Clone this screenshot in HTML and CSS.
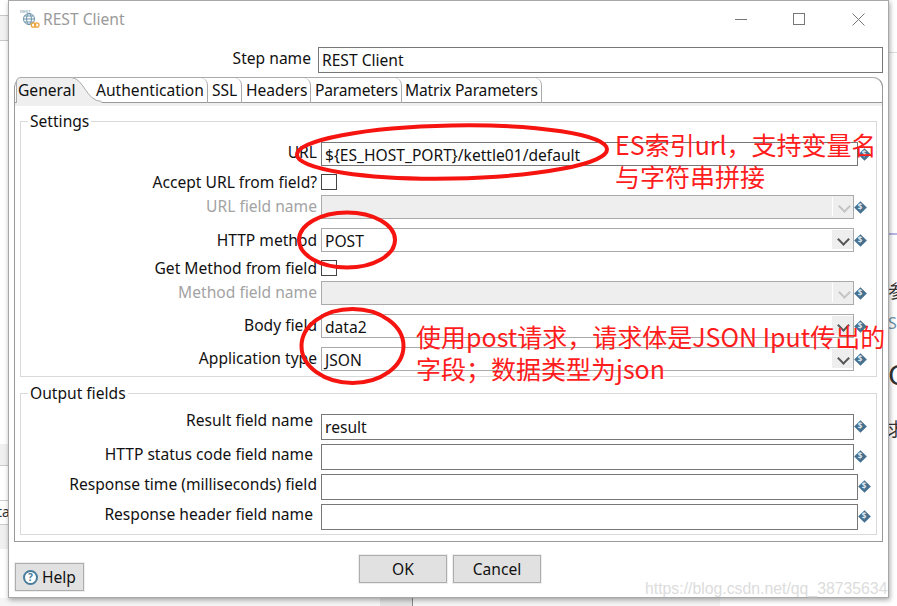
FILE: index.html
```html
<!DOCTYPE html>
<html lang="en">
<head>
<meta charset="utf-8">
<title>REST Client</title>
<link rel="stylesheet" href="styles.css">
</head>
<body>
<div class="desktop">
  <div class="bg bg-left-top"></div>
  <div class="bg bg-left-mid"></div>
  <div class="bg bg-left-cell"><span>ta</span></div>
  <div class="bg bg-left-low"></div>
  <div class="bg bg-bottom"></div>
  <div class="bg bg-bottom-bars"></div>
  <div class="bg bg-right-line"></div>
  <div class="bg bg-right-dots"></div>
  <span class="bg bg-char bg-can">参</span>
  <span class="bg bg-char bg-s">S</span>
  <span class="bg bg-char bg-c">C</span>
  <span class="bg bg-char bg-qiu">求</span>

  <main class="window">
    <header class="titlebar">
      <svg class="app-icon" width="20" height="20" viewBox="0 0 20 20" aria-hidden="true">
        <text x="0" y="4" class="app-icon-text">REST</text>
        <circle cx="9" cy="10" r="5.5" fill="none" stroke="#6d93a8" stroke-width="1"/>
        <ellipse cx="9" cy="10" rx="2.4" ry="5.5" fill="none" stroke="#6d93a8" stroke-width="1"/>
        <path d="M3.5 10H14.500M4.500 7H13.500M4.500 13H13.500" stroke="#6d93a8" stroke-width="1"/>
        <circle cx="13.500" cy="16" r="2.200" fill="none" stroke="#eda53d" stroke-width="1.300"/>
        <circle cx="16.800" cy="16" r="2.200" fill="none" stroke="#eda53d" stroke-width="1.300"/>
      </svg>
      <span class="title">REST Client</span>
      <div class="controls">
        <span class="ctl ctl-min"></span>
        <span class="ctl ctl-max"></span>
        <svg class="ctl-close" width="13" height="13" viewBox="0 0 13 13" aria-hidden="true"><path d="M.5.5l12 12M12.500.5l-12 12" stroke="#777" fill="none"/></svg>
      </div>
    </header>

    <div class="step-row">
      <label class="step-label">Step name</label>
      <div class="field step-field">REST Client</div>
    </div>

    <section class="folder">
      <nav class="tabs">
        <div class="tab tab-active">
          <svg class="tab-shape" width="86" height="26" viewBox="0 0 86 26" aria-hidden="true">
            <path d="M.5 26V5Q.5 .5 5 .5H55C68 1 70 24 85.500 24.500V26Z" fill="#efefef"/>
            <path d="M.5 26V5Q.5 .5 5 .5H55C68 1 70 24 85.500 24.500" fill="none" stroke="#aaa"/>
          </svg>
          <span class="tab-text">General</span>
        </div>
        <div class="tab tab-auth">Authentication</div>
        <div class="tab tab-ssl">SSL</div>
        <div class="tab tab-head">Headers</div>
        <div class="tab tab-para">Parameters</div>
        <div class="tab tab-matrix">Matrix Parameters</div>
      </nav>
      <div class="folder-body">
        <fieldset class="group group-settings">
          <legend>Settings</legend>
          <div class="row">
            <label class="lbl lbl-high">URL</label>
            <div class="field wide">${ES_HOST_PORT}/kettle01/default</div>
            <span class="var"><b>$</b></span>
          </div>
          <div class="row row-check gap-8">
            <label class="lbl lbl-down">Accept URL from field?</label>
            <span class="check"></span>
          </div>
          <div class="row gap-6">
            <label class="lbl lbl-off">URL field name</label>
            <div class="combo off"><span class="combo-text"></span><span class="arrow"></span></div>
            <span class="var"><b>$</b></span>
          </div>
          <div class="row gap-9">
            <label class="lbl lbl-down">HTTP method</label>
            <div class="combo"><span class="combo-text">POST</span><span class="arrow"></span></div>
            <span class="var"><b>$</b></span>
          </div>
          <div class="row row-check gap-8">
            <label class="lbl lbl-down">Get Method from field</label>
            <span class="check"></span>
          </div>
          <div class="row gap-6">
            <label class="lbl lbl-off">Method field name</label>
            <div class="combo off"><span class="combo-text"></span><span class="arrow"></span></div>
            <span class="var"><b>$</b></span>
          </div>
          <div class="row gap-9">
            <label class="lbl">Body field</label>
            <div class="combo"><span class="combo-text">data2</span><span class="arrow"></span></div>
            <span class="var"><b>$</b></span>
          </div>
          <div class="row gap-9">
            <label class="lbl">Application type</label>
            <div class="combo"><span class="combo-text">JSON</span><span class="arrow"></span></div>
            <span class="var"><b>$</b></span>
          </div>
        </fieldset>
        <fieldset class="group group-output">
          <legend>Output fields</legend>
          <div class="row row-out">
            <label class="lbl lbl-in lbl-result">Result field name</label>
            <div class="field narrow">result</div>
            <span class="var var-up"><b>$</b></span>
          </div>
          <div class="row row-out gap-4">
            <label class="lbl lbl-in">HTTP status code field name</label>
            <div class="field narrow"></div>
            <span class="var var-up"><b>$</b></span>
          </div>
          <div class="row row-out gap-4">
            <label class="lbl lbl-time">Response time (milliseconds) field</label>
            <div class="field wide"></div>
            <span class="var var-up"><b>$</b></span>
          </div>
          <div class="row row-out gap-4">
            <label class="lbl lbl-in">Response header field name</label>
            <div class="field wide"></div>
            <span class="var var-up"><b>$</b></span>
          </div>
        </fieldset>
      </div>
    </section>

    <footer class="footer">
      <button class="btn btn-help" type="button"><span class="help-icon">?</span>Help</button>
      <button class="btn btn-ok" type="button">OK</button>
      <button class="btn btn-cancel" type="button">Cancel</button>
    </footer>
  </main>

  <svg class="marks" width="897" height="606" viewBox="0 0 897 606" aria-hidden="true">
    <ellipse cx="452" cy="152" rx="155" ry="26.500" transform="rotate(-1 452 152)"/>
    <ellipse cx="347" cy="240" rx="48" ry="27.500"/>
    <ellipse cx="352.500" cy="346" rx="51" ry="37"/>
  </svg>
  <p class="note note-url">ES索引url，支持变量名<br>与字符串拼接</p>
  <p class="note note-body">使用post请求，请求体是JSON Iput传出的<br>字段；数据类型为json</p>
  <span class="watermark">https://blog.csdn.net/qq_38735634</span>
</div>
</body>
</html>
```
FILE: styles.css
```css
* { box-sizing: border-box; }
html, body { margin: 0; padding: 0; background: #fff; }
body { font-family: "Noto Sans", "Noto Sans CJK SC", sans-serif; font-size: 15.6px; color: #111; }

.desktop { position: relative; width: 897px; height: 606px; overflow: hidden; background: #fff; }

.bg { position: absolute; }
.bg-left-top { left: 0; top: 15px; width: 9px; height: 26px; background: #f1f1f1; border-top: 1px solid #c8c8c8; border-bottom: 1px solid #c8c8c8; }
.bg-left-mid { left: 0; top: 444px; width: 9px; height: 22px; background: #f0f0f0; border-bottom: 1px solid #ccc; }
.bg-left-cell { left: 0; top: 500px; width: 9px; height: 25px; border-top: 1px solid #ccc; border-bottom: 1px solid #ccc; font-size: 14px; line-height: 22px; color: #333; overflow: hidden; }
.bg-left-cell span { margin-left: -3px; }
.bg-left-low { left: 0; top: 525px; width: 9px; height: 24px; background: #f0f0f0; }
.bg-bottom { left: 0; top: 598px; width: 720px; height: 8px; background: #f5f5f5; }
.bg-bottom-bars { left: 380px; top: 598px; width: 33px; height: 8px; background: #e4e4e4; border-right: 1px solid #888; }
.bg-right-line { left: 889px; top: 52px; width: 8px; height: 1px; background: #ddd; }
.bg-right-dots { left: 889px; top: 233px; width: 8px; height: 2px; background: #b9b4e6; }
.bg-char { line-height: 1; left: 888px; color: #333; }
.bg-can { top: 282px; font-size: 18px; }
.bg-s { top: 315px; font-size: 16px; color: #6d93a8; }
.bg-c { top: 360px; font-size: 28px; }
.bg-qiu { top: 420px; font-size: 18px; left: 887px; }

.window { position: absolute; left: 8px; top: 0; width: 881px; height: 598px; display: flex; flex-direction: column; background: #fff; border: 1px solid #a8a8a8; box-shadow: 1px 2px 5px rgba(0, 0, 0, .35); }

.titlebar { display: flex; align-items: center; height: 36px; padding-left: 11px; flex: none; }
.app-icon { flex: none; }
.app-icon-text { font-size: 4px; fill: #6d93a8; font-family: "Liberation Sans", sans-serif; }
.title { margin-left: 3px; color: #9a9a9a; }
.controls { position: relative; margin-left: auto; display: flex; align-items: center; width: 130px; height: 13px; margin-right: 23px; }
.ctl-min { display: block; width: 12px; height: 1px; background: #777; margin-top: 0; }
.ctl-max { display: block; width: 12px; height: 12px; margin-left: 46px; border: 1px solid #777; }
.ctl-close { margin-left: 47px; flex: none; }

.step-row { display: flex; align-items: center; height: 26px; margin-top: 10px; flex: none; }
.step-label { width: 302px; text-align: right; margin-top: -4px; }
.field { height: 100%; padding: 1px 3px 0; border: 1px solid #777; background: #fff; line-height: 22px; white-space: nowrap; }
.step-field { width: 565px; margin-left: 7px; height: 26px; }

.folder { margin: 4px 5px 0 5px; height: 465px; flex: none; display: flex; flex-direction: column; border: 1px solid #999; border-top: 0; border-radius: 10px 10px 0 0; position: relative; }
.tabs { display: flex; height: 26px; flex: none; border-bottom: 1px solid #999; border-top: 1px solid #aaa; border-radius: 10px 10px 0 0; border-right: 1px solid #999; margin: 0 -1px 0 0; padding-left: 1px; }
.tab { height: 25px; line-height: 25px; border-right: 1px solid #aaa; border-top-right-radius: 7px; white-space: nowrap; flex: none; }
.tab-active { position: relative; width: 86px; margin-bottom: -1px; height: 26px; border-right: 0; margin-top: -1px; }
.tab-shape { position: absolute; left: 0; top: 0; }
.tab-text { position: relative; margin-left: 2px; line-height: 27px; }
.tab-auth { width: 112px; padding-left: 0; margin-left: -6px; }
.tab-ssl { width: 34px; padding-left: 4px; }
.tab-head { width: 69px; padding-left: 4px; }
.tab-para { width: 91px; padding-left: 4px; letter-spacing: -.2px; }
.tab-matrix { width: 140px; padding-left: 3px; letter-spacing: -.2px; }

.folder-body { flex: 1; padding: 4px 5px 6px; background: linear-gradient(#efefef, #efefef) top / 100% 3px no-repeat, #fff; display: flex; flex-direction: column; min-height: 0; }

.group { margin: 5px 0 0; padding: 0; border: 1px solid #d9d9d9; min-width: 0; position: relative; display: flex; flex-direction: column; }
.group legend { margin-left: 7px; padding: 0 2px; line-height: 18px; height: 18px; }
.group-settings { height: 265px; padding-top: 12px; }
.group-output { height: 151px; margin-top: 7px; padding-top: 12px; }

.row { display: flex; align-items: center; height: 24px; flex: none; }
.row-check { height: 15px; }
.row-out { height: 26px; }
.gap-4 { margin-top: 4px; }
.gap-6 { margin-top: 6px; }
.gap-8 { margin-top: 8px; }
.gap-9 { margin-top: 9px; }

.lbl { width: 296px; text-align: right; margin-right: 4px; white-space: nowrap; line-height: 18px; position: relative; top: -1px; flex: none; }
.lbl-high { top: -2px; }
.lbl-down { top: 0; }
.lbl-in { width: 292px; margin-right: 8px; top: -3px; }
.lbl-result { top: -7px; }
.lbl-time { top: -3px; }
.lbl-off { color: #a3a3a3; }

.wide { width: 537px; }
.narrow { width: 533px; }

.check { display: block; width: 16px; height: 16px; border: 1px solid #444; background: #fff; }

.combo { width: 533px; height: 100%; display: flex; align-items: stretch; border: 1px solid #aaa; background: #fff; }
.combo-text { flex: 1; padding: 1px 3px 0; line-height: 22px; }
.arrow { position: relative; width: 21px; margin: 1px 0 2px; background: #eee; flex: none; }
.arrow::before { content: ""; position: absolute; left: 7px; top: 5px; width: 7px; height: 7px; border-right: 2px solid #555; border-bottom: 2px solid #555; transform: rotate(45deg); }
.off { background: #eee; }
.off .arrow { border-left: 1px solid #fff; }
.off .arrow::before { border-color: #c4c4c4; }

.var { position: relative; display: block; width: 12px; height: 12px; flex: none; }
.var-up { top: -1px; }
.var::before { content: ""; position: absolute; left: 1.500px; top: 1.500px; width: 9px; height: 9px; background: #46708f; transform: rotate(45deg); }
.var b { position: absolute; left: 0; top: 0; width: 12px; height: 12px; text-align: center; font-size: 8px; line-height: 12px; font-weight: 700; color: #dfe8ee; }

.footer { position: relative; flex: 1; display: flex; align-items: flex-start; padding: 13px 0 0 6px; }
.btn { font: inherit; color: #111; background: #e1e1e1; border: 1px solid #adadad; outline: 1px solid #eee; height: 28px; padding: 0; display: block; }
.btn-help { display: flex; align-items: center; width: 69px; height: 28px; padding-left: 7px; margin-top: 8px; }
.help-icon { display: inline-block; width: 15px; height: 15px; margin-right: 4px; border: 2px solid #4a7d9c; border-radius: 50%; font-size: 10px; line-height: 11px; font-weight: 700; text-align: center; color: #4a7d9c; background: #fff; }
.btn-ok { width: 88px; margin-left: 275px; }
.btn-cancel { width: 88px; margin-left: 6px; }

.marks { position: absolute; left: 0; top: 0; pointer-events: none; }
.marks ellipse { fill: none; stroke: #f5140f; stroke-width: 4; }

.note { position: absolute; margin: 0; color: #ff1c1c; font-family: "Noto Sans CJK SC", "Noto Sans", sans-serif; font-size: 25px; line-height: 32px; white-space: nowrap; }
.note-url { left: 615px; top: 128px; }
.note-body { left: 416px; top: 320px; }

.watermark { position: absolute; left: 645px; top: 579px; font-family: "Liberation Sans", sans-serif; font-size: 15.800px; line-height: 20px; color: #dcdcdc; white-space: nowrap; }
```
